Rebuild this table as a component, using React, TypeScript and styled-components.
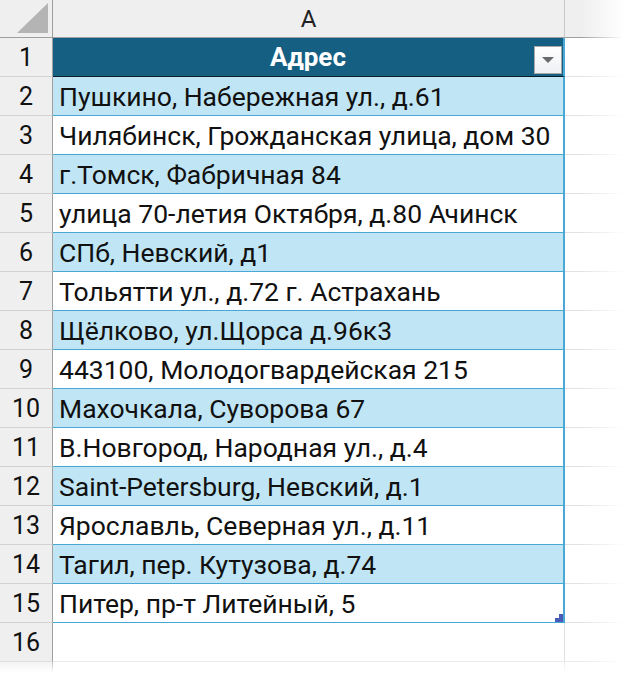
import React from 'react'
import styled, { createGlobalStyle } from 'styled-components'

const GlobalStyle = createGlobalStyle`
  html, body {
    margin: 0;
    padding: 0;
    background: #fff;
  }
  body {
    font-family: 'Roboto', 'Liberation Sans', sans-serif;
  }
`

const Sheet = styled.div`
  position: relative;
  width: 631px;
  height: 675px;
  overflow: hidden;
  display: grid;
  grid-template-columns: 53px 512px 1fr;
  grid-auto-rows: 39px;
  grid-template-rows: 38px;
  background: #fff;
`

const Corner = styled.div`
  background: #efefef;
  border-bottom: 1px solid #9f9f9f;
  border-right: 1px solid #9f9f9f;
  box-sizing: border-box;
  display: flex;
  align-items: flex-end;
  justify-content: flex-end;
  padding: 0 3px 4px 0;
`

const ColHead = styled.div<{ last?: boolean }>`
  background: #efefef;
  border-bottom: 1px solid #9f9f9f;
  border-right: 1px solid ${p => (p.last ? 'transparent' : '#c8c8c8')};
  box-sizing: border-box;
  display: flex;
  align-items: center;
  justify-content: center;
  font-size: 24px;
  color: #222;
`

const RowHead = styled.div`
  background: #efefef;
  border-bottom: 1px solid #d2d2d2;
  border-right: 1px solid #9f9f9f;
  box-sizing: border-box;
  display: flex;
  align-items: center;
  justify-content: center;
  font-size: 25px;
  color: #111;
`

const Cell = styled.div<{ tone: 'head' | 'blue' | 'white' | 'empty' }>`
  box-sizing: border-box;
  display: flex;
  align-items: center;
  padding-left: 6px;
  font-size: 26.5px;
  color: #111;
  white-space: nowrap;
  overflow: hidden;
  background: ${p =>
    p.tone === 'head' ? '#155f82' : p.tone === 'blue' ? '#c0e6f5' : '#fff'};
  border-bottom: 1px solid
    ${p => (p.tone === 'head' ? '#0b1e28' : p.tone === 'empty' ? '#e2e2e2' : '#4aa8d6')};
  border-right: ${p => (p.tone === 'empty' ? '1px solid #e2e2e2' : '2px solid #4aa8d6')};
  position: relative;
`

const HeadTitle = styled.span`
  flex: 1;
  text-align: center;
  color: #fff;
  font-weight: 700;
  font-size: 26px;
  padding-right: 6px;
`

const FilterButton = styled.div`
  position: absolute;
  right: 1px;
  top: 8px;
  width: 28px;
  height: 28px;
  box-sizing: border-box;
  border: 1px solid #a9a9a9;
  background: linear-gradient(#ffffff, #eef0f4);
  display: flex;
  align-items: center;
  justify-content: center;
`

const FillHandle = styled.div`
  position: absolute;
  right: -1px;
  bottom: -1px;
  width: 9px;
  height: 9px;
  background: linear-gradient(to right, transparent 0 4px, #4b5bb8 4px) top / 9px 4px no-repeat,
    linear-gradient(#4b5bb8, #4b5bb8) bottom / 9px 5px no-repeat;
`

const Blank = styled.div`
  box-sizing: border-box;
  border-bottom: 1px solid #e2e2e2;
`

const FadeRight = styled.div`
  position: absolute;
  top: 0;
  right: 0;
  width: 50px;
  height: 100%;
  background: linear-gradient(to right, rgba(255, 255, 255, 0), #fff 85%);
  pointer-events: none;
`

const FadeBottom = styled.div`
  position: absolute;
  left: 0;
  bottom: 0;
  width: 100%;
  height: 14px;
  background: linear-gradient(rgba(255, 255, 255, 0.2), #fff 80%);
  pointer-events: none;
`

const rows = [
  'Пушкино, Набережная ул., д.61',
  'Чилябинск, Грожданская улица, дом 30',
  'г.Томск, Фабричная 84',
  'улица 70-летия Октября, д.80 Ачинск',
  'СПб, Невский, д1',
  'Тольятти ул., д.72 г. Астрахань',
  'Щёлково, ул.Щорса д.96к3',
  '443100, Молодогвардейская 215',
  'Махочкала, Суворова 67',
  'В.Новгород, Народная ул., д.4',
  'Saint-Petersburg, Невский, д.1',
  'Ярославль, Северная ул., д.11',
  'Тагил, пер. Кутузова, д.74',
  'Питер, пр-т Литейный, 5',
]

const App = () => {
  return (
    <>
      <GlobalStyle />
      <Sheet>
        <Corner>
          <svg width="32" height="30" viewBox="0 0 32 30">
            <polygon points="31,0 31,30 0,30" fill="#b4b4b4" />
          </svg>
        </Corner>
        <ColHead>A</ColHead>
        <ColHead last />

        <RowHead>1</RowHead>
        <Cell tone="head">
          <HeadTitle>Адрес</HeadTitle>
          <FilterButton>
            <svg width="12" height="6" viewBox="0 0 12 6">
              <polygon points="0,0 12,0 6,6" fill="#6a6a6a" />
            </svg>
          </FilterButton>
        </Cell>
        <Blank />

        {rows.map((text, index) => (
          <React.Fragment key={index}>
            <RowHead>{index + 2}</RowHead>
            <Cell tone={index % 2 === 0 ? 'blue' : 'white'}>
              {text}
              {index === rows.length - 1 && <FillHandle />}
            </Cell>
            <Blank />
          </React.Fragment>
        ))}

        <RowHead>16</RowHead>
        <Cell tone="empty" />
        <Blank />
        <RowHead />
        <Cell tone="empty" />
        <Blank />
        <FadeRight />
        <FadeBottom />
      </Sheet>
    </>
  )
}

export default App
